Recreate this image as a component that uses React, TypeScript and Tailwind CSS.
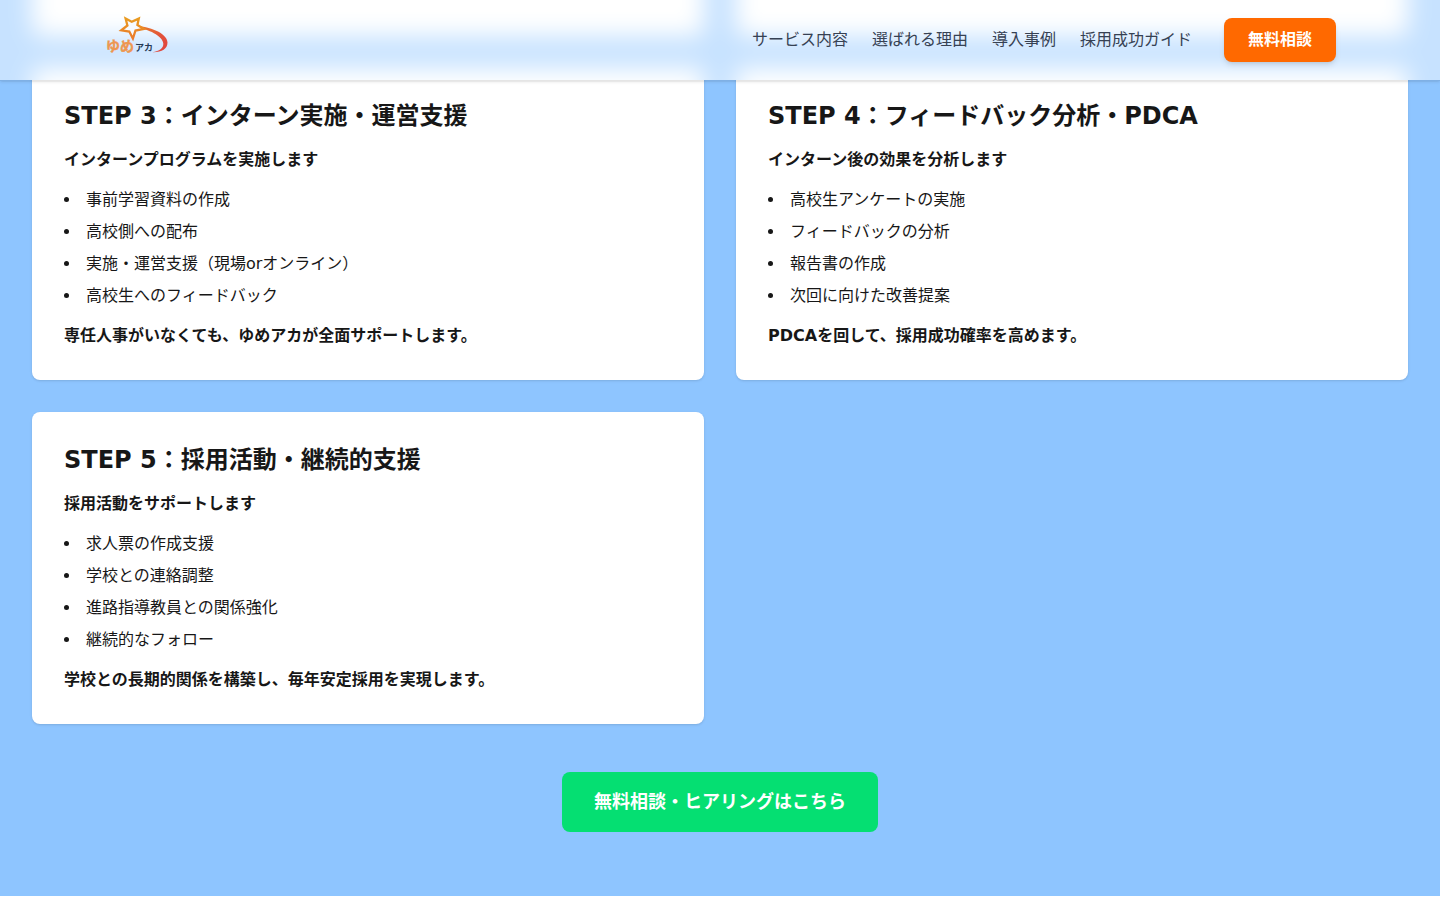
const navLinks = ["サービス内容", "選ばれる理由", "導入事例", "採用成功ガイド"];

type Step = { title: string; lead: string; items: string[]; note: string };

const steps: Step[] = [
  {
    title: "STEP 3：インターン実施・運営支援",
    lead: "インターンプログラムを実施します",
    items: ["事前学習資料の作成", "高校側への配布", "実施・運営支援（現場orオンライン）", "高校生へのフィードバック"],
    note: "専任人事がいなくても、ゆめアカが全面サポートします。",
  },
  {
    title: "STEP 4：フィードバック分析・PDCA",
    lead: "インターン後の効果を分析します",
    items: ["高校生アンケートの実施", "フィードバックの分析", "報告書の作成", "次回に向けた改善提案"],
    note: "PDCAを回して、採用成功確率を高めます。",
  },
  {
    title: "STEP 5：採用活動・継続的支援",
    lead: "採用活動をサポートします",
    items: ["求人票の作成支援", "学校との連絡調整", "進路指導教員との関係強化", "継続的なフォロー"],
    note: "学校との長期的関係を構築し、毎年安定採用を実現します。",
  },
];

function Logo() {
  return (
    <svg viewBox="0 0 64 48" className="h-12 w-16" role="img" aria-label="ゆめアカ">
      <defs>
        <linearGradient id="star" x1="0" y1="0" x2="0" y2="1">
          <stop offset="0" stopColor="#e99a20" />
          <stop offset="1" stopColor="#ea7a2c" />
        </linearGradient>
        <linearGradient id="tail" x1="0" y1="0" x2="1" y2="1">
          <stop offset="0" stopColor="#e8822c" />
          <stop offset="0.6" stopColor="#e2503a" />
          <stop offset="1" stopColor="#df4440" />
        </linearGradient>
      </defs>
      <path d="M32 10C44 10 63.500 17 63.500 26.500C63.500 33 57.500 36.500 48.500 36.200C55.500 35.300 59.600 32 59.300 27.500C58.800 20 44 12.500 32 12Z" fill="url(#tail)" />
      <path
        d="M21.600 2.600L27.700 5.800L34.800 2.600L33.400 8.900L39.800 13L31.500 14.500L28.900 22.500L25.300 15.500L17.300 14.300L23.400 9.500Z"
        fill="#f6faff"
        stroke="url(#star)"
        strokeWidth="2.300"
        strokeLinejoin="miter"
      />
      <text x="2" y="35" className="font-['Noto_Sans_CJK_JP',sans-serif] text-[14px] font-bold" fill="#ee9650" stroke="#ee9650" strokeWidth="0.400">
        ゆめ
      </text>
      <text x="31" y="35" className="font-['Noto_Sans_CJK_JP',sans-serif] text-[9px] font-bold" fill="#263a55">
        アカ
      </text>
    </svg>
  );
}

// Frosted glass behind the header: soft card shapes under a translucent white sheet.
function HeaderGlass() {
  return (
    <div aria-hidden="true" className="absolute inset-0 overflow-hidden bg-[#8ec5ff]">
      <div className="-mt-12 grid grid-cols-2 gap-8 px-8 blur-md">
        <div className="h-21 rounded-lg bg-white" />
        <div className="h-21 rounded-lg bg-white" />
        <div className="h-24 rounded-lg bg-white" />
        <div className="h-24 rounded-lg bg-white" />
      </div>
      <div className="absolute inset-0 bg-white/50" />
    </div>
  );
}

function StepCard({ title, lead, items, note }: Step) {
  return (
    <article className="rounded-lg bg-white p-8 shadow-sm">
      <h3 className="mb-4 text-2xl font-bold">{title}</h3>
      <p className="mb-4 font-bold">{lead}</p>
      <ul className="mb-4 list-inside list-disc space-y-2">
        {items.map((item) => (
          <li key={item}>{item}</li>
        ))}
      </ul>
      <p className="font-bold">{note}</p>
    </article>
  );
}

export default function App() {
  return (
    <div className="min-h-screen bg-white font-['DejaVu_Sans','Noto_Sans_CJK_JP',sans-serif] text-[#171717]">
      <header className="fixed inset-x-0 top-0 z-50 border-b border-black/10 shadow-sm">
        <HeaderGlass />
        <div className="relative mx-auto flex h-20 max-w-7xl items-center justify-between px-6">
          <a href="#top" className="block">
            <Logo />
          </a>
          <nav className="flex items-center gap-6">
            {navLinks.map((label) => (
              <a key={label} href="#" className="text-[#364153]">
                {label}
              </a>
            ))}
            <a href="#contact" className="ml-2 rounded-lg bg-[#ff6900] px-6 py-2.5 font-bold text-white shadow-md">
              無料相談
            </a>
          </nav>
        </div>
      </header>

      <main className="bg-[#8ec5ff] px-8 pb-16">
        <div className="grid grid-cols-2 gap-8">
          <div className="h-9 rounded-b-lg bg-white shadow-sm" />
          <div className="h-9 rounded-b-lg bg-white shadow-sm" />
          {steps.map((step) => (
            <StepCard key={step.title} {...step} />
          ))}
        </div>
        <div className="mt-12 flex justify-center">
          <a href="#contact" className="rounded-lg bg-[#05df72] px-8 py-4 text-lg font-bold text-white">
            無料相談・ヒアリングはこちら
          </a>
        </div>
      </main>
    </div>
  );
}
